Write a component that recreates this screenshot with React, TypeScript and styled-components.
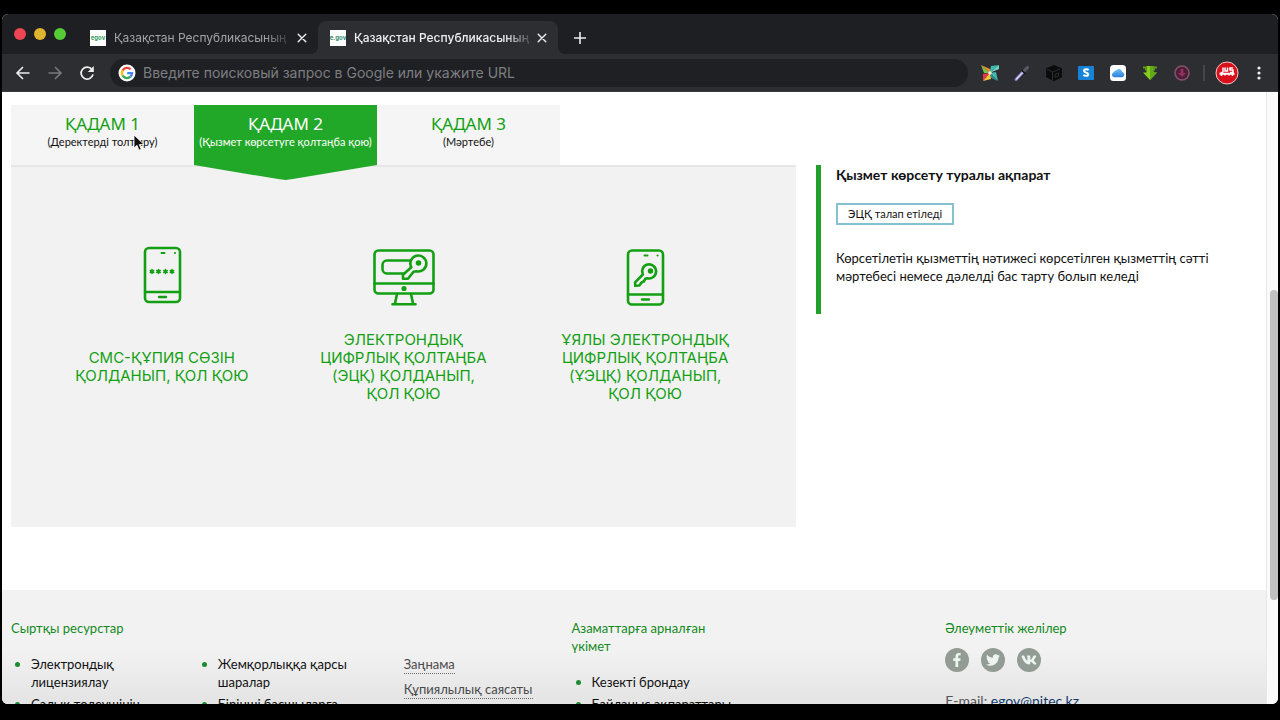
import React from 'react';
import styled, { createGlobalStyle, css } from 'styled-components';
import { FaFacebookF, FaTwitter, FaVk } from 'react-icons/fa';

const green = '#12a012';
const siteFont = '"Lato", "Noto Sans", sans-serif';
const chromeFont = '"Inter", "Roboto", sans-serif';

const GlobalStyle = createGlobalStyle`
  *, *::before, *::after { box-sizing: border-box; }
  body { margin: 0; background: #000; overflow: hidden; }
  button { border: 0; padding: 0; background: none; font: inherit; color: inherit; cursor: pointer; }
  h2, h3, p, ul { margin: 0; padding: 0; }
  ul { list-style: none; }
  a { color: inherit; text-decoration: none; }
  svg { display: block; }
`;

const Screen = styled.div`
  height: 100vh;
  padding: 14px 2px 16px;
  background: #000;
`;

const BrowserWindow = styled.div`
  position: relative;
  display: flex;
  flex-direction: column;
  height: 100%;
  border-radius: 6px;
  overflow: hidden;
  background: #fff;
`;

/* Title bar with tabs */

const TitleBar = styled.header`
  display: flex;
  height: 40px;
  padding-left: 12px;
  background: #1e1f22;
  font-family: ${chromeFont};
`;

const Lights = styled.div`
  display: flex;
  align-items: center;
  gap: 8px;
  height: 40px;
  margin-right: 12px;
`;

const Light = styled.button<{ $color: string }>`
  width: 12px;
  height: 12px;
  border-radius: 50%;
  background: ${(p) => p.$color};
`;

const Tab = styled.div<{ $active?: boolean }>`
  position: relative;
  display: flex;
  align-items: center;
  flex: 0 1 240px;
  min-width: 0;
  height: 33px;
  margin-top: 7px;
  padding: 0 10px 0 12px;
  gap: 8px;
  font-size: 12px;
  line-height: 16px;
  color: #a2a4a8;
  ${(p) =>
    p.$active &&
    css`
      background: #2d2e31;
      border-radius: 8px 8px 0 0;
      color: #eeeff1;
      font-weight: 500;
      &::before,
      &::after {
        content: '';
        position: absolute;
        bottom: 0;
        width: 8px;
        height: 8px;
      }
      &::before {
        right: 100%;
        background: radial-gradient(circle at 0 0, transparent 8px, #2d2e31 8px);
      }
      &::after {
        left: 100%;
        background: radial-gradient(circle at 100% 0, transparent 8px, #2d2e31 8px);
      }
    `}
`;

const Favicon = styled.span<{ $tint: string }>`
  display: flex;
  align-items: center;
  justify-content: center;
  flex: none;
  width: 16px;
  height: 16px;
  overflow: hidden;
  background: #fff;
  color: ${(p) => p.$tint};
  font-size: 6px;
  line-height: 8px;
  font-weight: 700;
`;

const TabTitle = styled.span`
  flex: 1;
  min-width: 0;
  margin-right: -6px;
  overflow: hidden;
  white-space: nowrap;
  mask-image: linear-gradient(to right, #000 84%, transparent 100%);
`;

const IconButton = styled.button<{ $width: number; $tone?: string }>`
  display: flex;
  align-items: center;
  justify-content: center;
  flex: none;
  width: ${(p) => p.$width}px;
  height: 28px;
  color: ${(p) => p.$tone ?? '#eceded'};
`;

const NewTab = styled(IconButton)`
  margin: 10px 0 0 8px;
`;

/* Toolbar */

const Toolbar = styled.div`
  display: flex;
  align-items: center;
  height: 38px;
  padding: 0 4px 0 5px;
  background: #2d2e31;
  border-bottom: 1px solid #3a3b3e;
`;

const Omnibox = styled.label`
  display: flex;
  align-items: center;
  flex: 1;
  min-width: 0;
  height: 28px;
  margin: 0 6px 0 7px;
  padding: 0 8px;
  gap: 7px;
  border-radius: 14px;
  background: #1f2023;
`;

const OmniboxInput = styled.input`
  flex: 1;
  min-width: 0;
  border: 0;
  padding: 0;
  outline: none;
  background: none;
  color: #e8eaed;
  font: 14px/20px ${chromeFont};
  &::placeholder {
    color: #7c7e82;
    opacity: 1;
  }
`;

const Separator = styled.span`
  width: 2px;
  height: 16px;
  margin: 0 5px;
  background: #45464a;
`;

/* Page */

const Viewport = styled.div`
  display: flex;
  flex: 1;
  min-height: 0;
`;

const Page = styled.div`
  flex: 1;
  min-width: 0;
  overflow: hidden;
  background: #fff;
  color: #111;
  font: 13px/18px ${siteFont};
`;

const ScrollTrack = styled.div`
  display: grid;
  grid-template-rows: 198fr 310fr 104fr;
  flex: none;
  width: 12px;
  padding-left: 3px;
  background: #fafafa;
  border-left: 1px solid #e8e8e8;
`;

const ScrollThumb = styled.div`
  grid-row: 2;
  border-radius: 4px;
  background: #c1c1c1;
`;

const Main = styled.main`
  display: grid;
  grid-template-columns: 785fr 450fr;
  column-gap: 20px;
  padding: 13px 0 63px 9px;
`;

const Steps = styled.nav`
  display: flex;
`;

const Step = styled.button<{ $active?: boolean }>`
  position: relative;
  flex: 0 1 183px;
  height: 60px;
  padding-bottom: 4px;
  background: ${(p) => (p.$active ? '#22a829' : '#f5f5f5')};
  color: ${(p) => (p.$active ? '#fff' : '#111')};
  white-space: nowrap;
  ${(p) =>
    p.$active &&
    css`
      &::after {
        content: '';
        position: absolute;
        top: 100%;
        left: 0;
        right: 0;
        height: 15px;
        background: #22a829;
        clip-path: polygon(0 0, 100% 0, 54% 94%, 50% 100%, 46% 94%);
      }
    `}
`;

const StepTitle = styled.span<{ $active?: boolean }>`
  display: block;
  font: 17px/18px "Noto Sans", sans-serif;
  color: ${(p) => (p.$active ? '#fff' : green)};
`;

const StepNote = styled.span`
  display: block;
  font-size: 11px;
  line-height: 18px;
`;

const Panel = styled.section`
  display: grid;
  grid-template-columns: repeat(3, 1fr);
  align-items: start;
  min-height: 362px;
  padding: 76px 30px 0;
  background: #f2f2f2;
  border-top: 2px solid #e6e6e6;
`;

const Option = styled.button`
  display: flex;
  flex-direction: column;
  align-items: center;
  gap: 24px;
  padding: 0 32px;
  color: ${green};
`;

const OptionLabel = styled.span`
  display: flex;
  align-items: center;
  min-height: 72px;
  font: 15px/18px ${chromeFont};
  text-align: center;
`;

const Info = styled.aside`
  align-self: start;
  min-height: 149px;
  margin-top: 60px;
  padding: 0 40px 0 15px;
  border-left: 5px solid #22a02c;
`;

const InfoTitle = styled.h2`
  font-size: 14px;
  line-height: 20px;
  font-weight: 700;
  color: #111;
`;

const Badge = styled.span`
  display: inline-block;
  margin: 18px 0 24px;
  padding: 0 10px;
  border: 2px solid #86c1d2;
  font-size: 11px;
  line-height: 18px;
`;

/* Footer */

const Footer = styled.footer`
  display: grid;
  grid-template-columns: repeat(5, 187fr) 321fr;
  min-height: 160px;
  padding: 29px 0 0 9px;
  background: linear-gradient(#f2f2f2 60px, #e2e2e2 120px);
`;

const Column = styled.div<{ $at: number; $offset?: boolean; $indent?: boolean }>`
  grid-column: ${(p) => p.$at};
  padding: ${(p) => (p.$offset ? '36px' : '0')} 24px 0 ${(p) => (p.$indent ? '19px' : '0')};
`;

const FooterTitle = styled.h3`
  margin-bottom: 18px;
  font-size: 13px;
  line-height: 18px;
  font-weight: 400;
  color: #128a1c;
`;

const LinkList = styled.ul`
  display: grid;
  gap: 4px;
`;

const LinkItem = styled.li`
  position: relative;
  padding-left: 20px;
  &::before {
    content: '';
    position: absolute;
    left: 4px;
    top: 7px;
    width: 5px;
    height: 5px;
    border-radius: 50%;
    background: #1b8a32;
  }
`;

const PolicyList = styled.ul`
  display: grid;
  gap: 6px;
`;

const PolicyLink = styled.a`
  display: inline-block;
  border-bottom: 1px dotted #666;
  color: #4a4a4a;
  white-space: nowrap;
`;

const Socials = styled.div`
  display: flex;
  gap: 12px;
  margin: -7px 0 20px;
`;

const Social = styled.a`
  display: flex;
  align-items: center;
  justify-content: center;
  width: 24px;
  height: 24px;
  border-radius: 50%;
  background: #929b94;
  color: #eef5f0;
`;

const Contact = styled.p`
  font-size: 14px;
  color: #555;
  white-space: nowrap;
`;

const MailLink = styled.a`
  color: #123a6b;
  text-decoration: underline;
`;

const Pointer = styled.svg`
  position: absolute;
  left: 131px;
  top: 120px;
`;

/* Icons */

const CloseIcon = () => (
  <svg width="10" height="10" viewBox="0 0 10 10" stroke="currentColor" strokeWidth="1.4" strokeLinecap="round">
    <path d="M1.2 1.2 8.8 8.8M8.8 1.2 1.2 8.8" />
  </svg>
);

const BackIcon = () => (
  <svg width="16" height="16" viewBox="0 0 16 16" fill="none" stroke="currentColor" strokeWidth="1.6">
    <path d="M14.5 8H2.5M8 2 2 8l6 6" />
  </svg>
);

const ForwardIcon = () => (
  <svg width="16" height="16" viewBox="0 0 16 16" fill="none" stroke="currentColor" strokeWidth="1.6">
    <path d="M1.5 8h12M8 2l6 6-6 6" />
  </svg>
);

const ReloadIcon = () => (
  <svg width="16" height="16" viewBox="0 0 16 16" fill="none">
    <path d="M13 4.6A6 6 0 1 0 14 9.4" stroke="currentColor" strokeWidth="1.8" />
    <path d="M14.8 1v6H8.8Z" fill="currentColor" />
  </svg>
);

const GoogleIcon = () => (
  <svg width="18" height="18" viewBox="0 0 18 18">
    <circle cx="9" cy="9" r="8.5" fill="#fff" />
    <g fill="none" strokeWidth="2.3">
      <path d="M12.6 5.3A5 5 0 0 0 4.7 6.4" stroke="#ea4335" />
      <path d="M4.7 6.4a5 5 0 0 0 0 5.2" stroke="#fbbc05" />
      <path d="M4.7 11.6a5 5 0 0 0 7.7 1.1" stroke="#34a853" />
      <path d="M12.4 12.7A5 5 0 0 0 14 9.2H9.2" stroke="#4285f4" />
    </g>
  </svg>
);

const PinwheelIcon = () => (
  <svg width="18" height="18" viewBox="0 0 18 18">
    <path d="M0 1l9 4v4Z" fill="#f08a2c" />
    <path d="M0 1l3 8 6 0Z" fill="#7cc04b" />
    <path d="M18 1 10 2 8.5 9Z" fill="#3fb8a9" />
    <path d="M18 1v4l-9.5 4Z" fill="#6fd6c5" />
    <path d="M17 17 15 8 9 9Z" fill="#45b9b0" />
    <path d="M17 17 9 9l1 5Z" fill="#2b8f92" />
    <path d="M2 17l0-7 7-1Z" fill="#e5354a" />
    <path d="M2 17l8-2-1-6Z" fill="#f4c63a" />
    <circle cx="9" cy="9" r="1.8" fill="#fbe9d0" />
  </svg>
);

const DropperIcon = () => (
  <svg width="16" height="16" viewBox="0 0 16 16" fill="none" strokeLinecap="round">
    <path d="M2 14.5 9 7" stroke="#8a80c8" strokeWidth="3" />
    <path d="M2.5 14 8.5 7.6" stroke="#dedcf5" strokeWidth="1.2" />
    <path d="M10 6 13.5 2.5" stroke="#555860" strokeWidth="3.2" />
    <path d="M8 5.5 11 8.5" stroke="#17181a" strokeWidth="1.6" />
  </svg>
);

const CubeIcon = () => (
  <svg width="16" height="16" viewBox="0 0 16 16" fill="#0b0b0c" stroke="#37383b" strokeWidth="0.8">
    <path d="M8 .5 15.5 3.6V12L8 15.7.5 12V3.6Z" stroke="#0b0b0c" />
    <path d="M6.5 7 14 4M6.5 7v8M1 4.2 6.5 7" fill="none" />
    <path d="M9 9.5l3.5-1.5v3L9 12.5Z" />
  </svg>
);

const SIcon = () => (
  <svg width="16" height="14" viewBox="0 0 16 14">
    <rect width="16" height="14" rx="1" fill="#1683d8" />
    <path
      d="M10.5 4.2C9.8 3 6 2.700 6 4.900c0 2 4.300 1.400 4.300 3.300 0 2.200-3.900 2-4.800.6"
      fill="none"
      stroke="#fff"
      strokeWidth="2"
    />
  </svg>
);

const CloudIcon = () => (
  <svg width="16" height="16" viewBox="0 0 16 16">
    <defs>
      <linearGradient id="cloud" x2="0" y2="1">
        <stop offset="0" stopColor="#6fc3f2" />
        <stop offset="1" stopColor="#2a7fdc" />
      </linearGradient>
    </defs>
    <rect width="16" height="16" rx="3.5" fill="#fff" />
    <path
      d="M4.2 12.2a2.5 2.5 0 0 1-.4-4.9 2.3 2.3 0 0 1 2.3-1.7 3.2 3.2 0 0 1 6 1.2 2.8 2.8 0 0 1 .2 5.4Z"
      fill="url(#cloud)"
    />
  </svg>
);

const DownloadIcon = () => (
  <svg width="16" height="16" viewBox="0 0 16 16">
    <path d="M4.500 1h7v6.500H15L8 15 1 7.500h3.500Z" fill="#86cc1f" />
    <path d="M8 1h3.500v6.500H15L8 15Z" fill="#62aa16" />
    <path d="M1 1.500h3.500v4H3v-2H1ZM15 1.500h-3.500v4H13v-2h2Z" fill="#5f9d16" />
  </svg>
);

const CircleArrowIcon = () => (
  <svg width="16" height="16" viewBox="0 0 16 16">
    <circle cx="8" cy="8" r="7" fill="#4b1f38" stroke="#85506a" strokeWidth="1.6" />
    <path d="M6.6 4h2.8v4H12l-4 4-4-4h2.6Z" fill="#93305b" />
  </svg>
);

const AvatarIcon = () => (
  <svg width="24" height="24" viewBox="0 0 24 24">
    <circle cx="12" cy="12" r="11" fill="#d8101c" stroke="#f3c9cb" strokeWidth="1" />
    <g fill="none" stroke="#fff" strokeWidth="1.5">
      <path d="M8 6.500v4q0 1.500-2.500 1M10 6.500v3.500h2.500V6.500M18 7h-3v2h3v2.500h-3" />
      <path d="M4.500 12.800h15" strokeWidth="2" />
      <path d="M6.500 15v-2M10 14.500v-2M14 14.500v-2M17.500 15v-2" />
    </g>
  </svg>
);

const MenuIcon = () => (
  <svg width="4" height="16" viewBox="0 0 4 16" fill="currentColor">
    <circle cx="2" cy="3" r="1.6" />
    <circle cx="2" cy="8" r="1.6" />
    <circle cx="2" cy="13" r="1.6" />
  </svg>
);

const PlusIcon = () => (
  <svg width="12" height="12" viewBox="0 0 12 12" stroke="currentColor" strokeWidth="1.6">
    <path d="M6 0v12M0 6h12" />
  </svg>
);

const OptionSvg = (p: { children: React.ReactNode }) => (
  <svg
    width="64"
    height="64"
    viewBox="0 0 64 64"
    fill="none"
    stroke="currentColor"
    strokeWidth="2.6"
    strokeLinecap="round"
    strokeLinejoin="round"
  >
    {p.children}
  </svg>
);

const star = 'm0-2v4m-1.7-3 3.4 2m0-2-3.4 2';

const SmsIcon = () => (
  <OptionSvg>
    <rect x="15" y="5" width="35" height="54" rx="4" />
    <path d="M15 49h35M29 54h7" strokeWidth="2.4" />
    <path d="M31.5 10h3M45 10h.1" strokeWidth="2" />
    <path d={`M22 28.5${star}M28.500 28.500${star}M35.500 28.500${star}M42 28.500${star}`} strokeWidth="1.5" />
  </OptionSvg>
);

const MonitorKeyIcon = () => (
  <OptionSvg>
    <rect x="3.5" y="7.5" width="59" height="43" rx="4" />
    <path d="M3.5 40.5h59M26 51l-2 9.500M40 51l2 9.500M21.500 61.200h23" />
    <circle cx="33" cy="45.5" r="1.3" fill="currentColor" />
    <path d="M38 17.5H16a4.500 4.500 0 0 0-4.500 4.500v4a4.500 4.500 0 0 0 4.500 4.500h17" />
    <path d="M40.3 24.3a8 8 0 1 1 5.200 4l-3 .5-5.500 7H32v-4Z" />
    <circle cx="47.5" cy="20" r="1.5" fill="currentColor" />
  </OptionSvg>
);

const PhoneKeyIcon = () => (
  <OptionSvg>
    <rect x="15" y="7.5" width="35" height="54" rx="4" />
    <path d="M15 51.5h35M29 56.5h7" strokeWidth="2.4" />
    <path d="M31.5 12.5h3M44.500 12.500h.1" strokeWidth="2" />
    <path d="M29.8 31.5a7 7 0 1 1 4.500 3.700l-2 .6-1.500 2.700-2 .7-2.500 3.300-4 .3-.2-3.500Z" />
    <circle cx="37.5" cy="28" r="1.4" fill="currentColor" />
  </OptionSvg>
);

const extensions: [string, React.FC][] = [
  ['Pinwheel', PinwheelIcon],
  ['Color picker', DropperIcon],
  ['Cube', CubeIcon],
  ['S', SIcon],
  ['iCloud', CloudIcon],
  ['Download', DownloadIcon],
  ['Video download', CircleArrowIcon],
];

const steps = [
  { title: 'ҚАДАМ 1', note: '(Деректерді толтыру)' },
  { title: 'ҚАДАМ 2', note: '(Қызмет көрсетуге қолтаңба қою)', active: true },
  { title: 'ҚАДАМ 3', note: '(Мәртебе)' },
];

const options: { label: string; Icon: React.FC }[] = [
  { label: 'СМС-ҚҰПИЯ СӨЗІН ҚОЛДАНЫП, ҚОЛ ҚОЮ', Icon: SmsIcon },
  { label: 'ЭЛЕКТРОНДЫҚ ЦИФРЛЫҚ ҚОЛТАҢБА (ЭЦҚ) ҚОЛДАНЫП, ҚОЛ ҚОЮ', Icon: MonitorKeyIcon },
  { label: 'ҰЯЛЫ ЭЛЕКТРОНДЫҚ ЦИФРЛЫҚ ҚОЛТАҢБА (ҰЭЦҚ) ҚОЛДАНЫП, ҚОЛ ҚОЮ', Icon: PhoneKeyIcon },
];

const Links = ({ items }: { items: string[] }) => (
  <LinkList>
    {items.map((text) => (
      <LinkItem key={text}>
        <a href="#">{text}</a>
      </LinkItem>
    ))}
  </LinkList>
);

const BrowserTab = (p: { favicon: string; tint: string; active?: boolean }) => (
  <Tab $active={p.active}>
    <Favicon $tint={p.tint}>{p.favicon}</Favicon>
    <TabTitle>Қазақстан Республикасының</TabTitle>
    <IconButton $width={12} aria-label="Close tab">
      <CloseIcon />
    </IconButton>
  </Tab>
);

export default function App() {
  return (
    <Screen>
      <GlobalStyle />
      <BrowserWindow>
        <TitleBar>
          <Lights>
            <Light $color="#ee4453" aria-label="Close" />
            <Light $color="#dfb52f" aria-label="Minimize" />
            <Light $color="#55cb35" aria-label="Zoom" />
          </Lights>
          <BrowserTab favicon="egov" tint="#3a9a5c" />
          <BrowserTab favicon="e.gov" tint="#2c8a6a" active />
          <NewTab $width={28} aria-label="New tab">
            <PlusIcon />
          </NewTab>
        </TitleBar>
        <Toolbar>
          <IconButton $width={32} aria-label="Back">
            <BackIcon />
          </IconButton>
          <IconButton $width={32} $tone="#77797d" aria-label="Forward">
            <ForwardIcon />
          </IconButton>
          <IconButton $width={32} aria-label="Reload">
            <ReloadIcon />
          </IconButton>
          <Omnibox>
            <GoogleIcon />
            <OmniboxInput type="text" placeholder="Введите поисковый запрос в Google или укажите URL" />
          </Omnibox>
          {extensions.map(([name, Icon]) => (
            <IconButton key={name} $width={32} aria-label={name}>
              <Icon />
            </IconButton>
          ))}
          <Separator />
          <IconButton $width={34} aria-label="Profile">
            <AvatarIcon />
          </IconButton>
          <IconButton $width={30} aria-label="Menu">
            <MenuIcon />
          </IconButton>
        </Toolbar>
        <Viewport>
          <Page>
            <Main>
              <div>
                <Steps>
                  {steps.map((s) => (
                    <Step key={s.title} $active={s.active}>
                      <StepTitle $active={s.active}>{s.title}</StepTitle>
                      <StepNote>{s.note}</StepNote>
                    </Step>
                  ))}
                </Steps>
                <Panel>
                  {options.map(({ label, Icon }) => (
                    <Option key={label}>
                      <Icon />
                      <OptionLabel>{label}</OptionLabel>
                    </Option>
                  ))}
                </Panel>
              </div>
              <Info>
                <InfoTitle>Қызмет көрсету туралы ақпарат</InfoTitle>
                <Badge>ЭЦҚ талап етіледі</Badge>
                <p>Көрсетілетін қызметтің нәтижесі көрсетілген қызметтің сәтті мәртебесі немесе дәлелді бас тарту болып келеді</p>
              </Info>
            </Main>
            <Footer>
              <Column $at={1}>
                <FooterTitle>Сыртқы ресурстар</FooterTitle>
                <Links items={['Электрондық лицензиялау', 'Салық төлеушінің']} />
              </Column>
              <Column $at={2} $offset>
                <Links items={['Жемқорлыққа қарсы шаралар', 'Бірінші басшыларға']} />
              </Column>
              <Column $at={3} $offset $indent>
                <PolicyList>
                  <li>
                    <PolicyLink href="#">Заңнама</PolicyLink>
                  </li>
                  <li>
                    <PolicyLink href="#">Құпиялылық саясаты</PolicyLink>
                  </li>
                </PolicyList>
              </Column>
              <Column $at={4}>
                <FooterTitle>Азаматтарға арналған үкімет</FooterTitle>
                <Links items={['Кезекті брондау', 'Байланыс ақпараттары']} />
              </Column>
              <Column $at={6}>
                <FooterTitle>Әлеуметтік желілер</FooterTitle>
                <Socials>
                  <Social href="#" aria-label="Facebook">
                    <FaFacebookF size={14} />
                  </Social>
                  <Social href="#" aria-label="Twitter">
                    <FaTwitter size={14} />
                  </Social>
                  <Social href="#" aria-label="VK">
                    <FaVk size={16} />
                  </Social>
                </Socials>
                <Contact>
                  E-mail: <MailLink href="mailto:egov@nitec.kz">egov@nitec.kz</MailLink>
                </Contact>
              </Column>
            </Footer>
          </Page>
          <ScrollTrack>
            <ScrollThumb />
          </ScrollTrack>
        </Viewport>
        <Pointer width="12" height="18" viewBox="0 0 12 18">
          <path d="M1 1v13l3-2.8 2 5 2.200-1-2-4.700H11Z" fill="#111" stroke="#fff" strokeWidth="0.8" />
        </Pointer>
      </BrowserWindow>
    </Screen>
  );
}
